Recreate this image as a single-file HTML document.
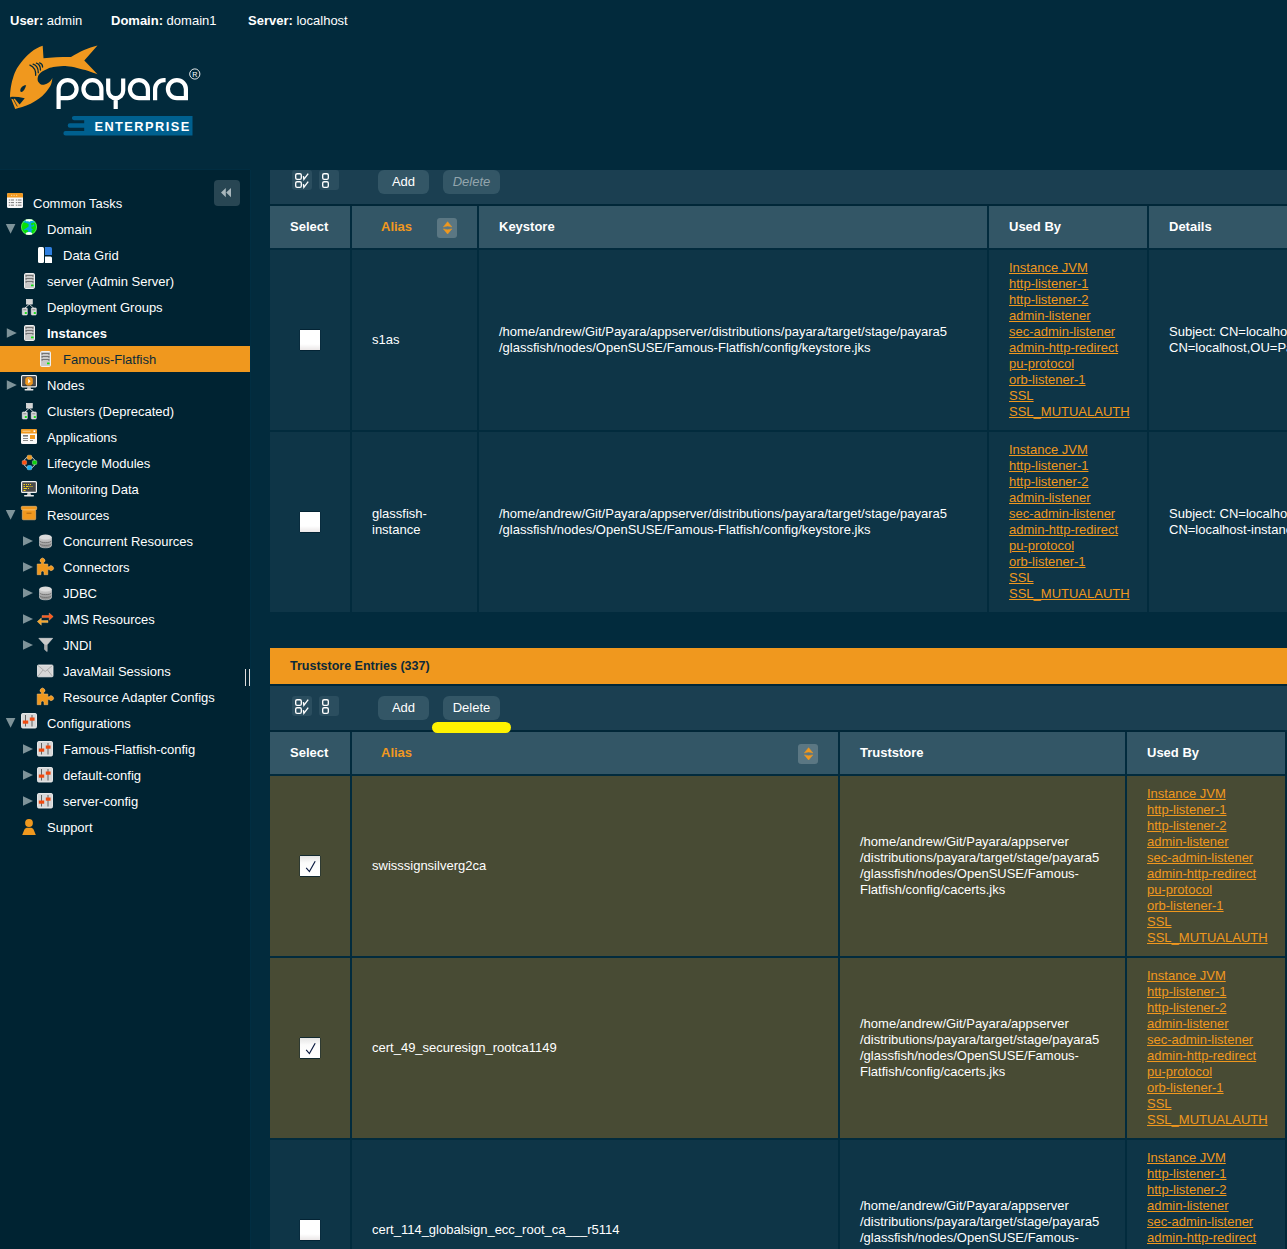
<!DOCTYPE html><html><head><meta charset="utf-8"><style>
*{box-sizing:border-box}
html,body{margin:0;padding:0}
body{width:1287px;height:1249px;overflow:hidden;position:relative;background:#022b3d;font-family:"Liberation Sans",sans-serif;font-size:13px;color:#fff}
.abs{position:absolute}
.hdr{left:0;top:0;width:1287px;height:170px;background:#022a3c}
.side{left:0;top:170px;width:250px;height:1079px;background:#002332}
.ti{position:absolute;height:26px;line-height:27px;white-space:nowrap;font-size:13px;color:#fff}
.tri{position:absolute;width:0;height:0}
.cell{position:absolute;overflow:hidden}
.th{background:#335666;font-weight:bold;font-size:13px;line-height:41px;padding-left:20px}
.td{background:#0e3547;line-height:16px;display:flex;align-items:center;padding-left:20px;padding-top:0px}
.sel{background:#484b34}
.lnk{color:#f0981e;text-decoration:underline}
.cb{position:absolute;width:20px;height:20px;background:linear-gradient(#fff 0%,#fff 70%,#ebe7e7 100%);box-shadow:0 -1px 0 rgba(0,30,45,.75),0 1px 0 rgba(0,30,45,.75),-1px 0 0 rgba(0,30,45,.35),1px 0 0 rgba(0,30,45,.35)}
.cbc{background:linear-gradient(#e4e4e4 0%,#fbfbfb 35%,#fff 100%)}
.btn{position:absolute;height:24px;border-radius:6px;background:#335666;line-height:24px;text-align:center;font-size:13px;color:#fff}
.ibtn{position:absolute;width:20px;height:20px;border-radius:3px;background:#2b4e5f}
.sort{position:absolute;width:20px;height:20px;border-radius:3px;background:#5b7783}
</style></head><body>

<div class="abs hdr">
<div class="abs" style="left:10px;top:13px;font-size:13px;line-height:15px;white-space:nowrap"><b>User:</b> admin</div>
<div class="abs" style="left:111px;top:13px;font-size:13px;line-height:15px;white-space:nowrap"><b>Domain:</b> domain1</div>
<div class="abs" style="left:248px;top:13px;font-size:13px;line-height:15px;white-space:nowrap"><b>Server:</b> localhost</div>
<svg class="abs" style="left:0;top:0" width="210" height="145" viewBox="0 0 210 145">
<path fill="#f0981e" d="M42.7,45.8 L43.5,58.3 C52,57.5 63,57 71,57.1 C80,51 88,48 97.5,45.4 L84.3,60.6 L97.5,74.2 C90,71.5 86,70 82.7,69.5 C75,67 68,66 63.3,66 C55,66.5 50,67.5 47.7,68.7 C43,70.5 40.5,72.5 39.2,74.2 C37,77 37.5,81 38.4,82 C40,84.5 42,85 43.9,84.7 C48,84 51,81 52.4,78 C52,81.5 51.5,84 50,86.6 C47,91 45,93.5 42.3,96 C38,99.5 34,102 30.6,103.7 C25,106 19,108 15.2,108.9 L11.4,99.2 L10.05,96.9 L10,96 C10.5,88 11.5,83 12.8,78.8 C15,71 17.5,67 20.5,63.3 C24,58.5 27,55.5 30.6,52.4 C35,49 39,47 42.7,45.8 Z"/>
<path fill="#022a3c" d="M26.2,85.3 C25.2,88.2 23.6,92.2 21.2,92 C19.6,91.4 20.2,88.6 21.8,87 C23.2,85.7 25,85 26.2,85.3 Z"/>
<path fill="#022a3c" d="M10.05,96.9 Q17,96.5 24.75,98.3 L19.6,104.6 L14.8,98.7 L11.5,99.3 Z"/>
<path stroke="#022a3c" stroke-width="0.8" fill="none" d="M13.3,99.1 L17.3,106.5"/>
<path stroke="#022a3c" stroke-width="1.25" fill="none" stroke-linecap="round" d="M29.9,65.1 Q36.1,68 35.7,75.3 M33.1,64.1 Q38.3,65.8 38.3,72.7 M36.4,63.2 Q40.5,64.5 40.5,70.1 M39.6,62.8 Q42.6,63.6 42.6,67.1"/>
<g fill="none" stroke="#fff" stroke-width="4.2" stroke-linecap="butt">
<path d="M58.6,109.1 V89.1 A9,9 0 1 1 67.6,98.1 H58.6"/>
<path d="M101.4,100.2 V89.1 A9,9 0 1 0 92.4,98.1 H101.4"/>
<path d="M108.2,78.6 V90.6 A7.5,7.5 0 0 0 123.2,90.6 V78.6 M115.7,97 V109.1"/>
<path d="M147.9,100.2 V89.1 A9,9 0 1 0 138.9,98.1 H147.9"/>
<path d="M155.1,100.2 V89 A9,9 0 0 1 164.1,80.1 H165.6"/>
<path d="M185.9,100.2 V89.1 A9,9 0 1 0 176.9,98.1 H185.9"/>
</g>
<circle cx="194.8" cy="74" r="5.1" fill="none" stroke="#fff" stroke-width="0.9"/>
<text x="194.9" y="76.6" font-size="7.2" fill="#fff" text-anchor="middle" font-family="Liberation Sans">R</text>
<path fill="#00608f" d="M74,116 H192.5 V135.5 H65.6 A2.2,2.2 0 0 1 65.6,131.1 H84.2 V127.7 H69.9 A2.2,2.2 0 0 1 69.9,123.3 H84.2 V120.2 H74 A2.1,2.1 0 0 1 74,116 Z"/>
<text x="94.4" y="130.5" font-size="12.8" font-weight="bold" fill="#fff" letter-spacing="1.45" font-family="Liberation Sans">ENTERPRISE</text>
</svg>
</div>
<div class="abs side">
<div class="ti" style="left:33px;top:20px;color:#fff;font-weight:normal">Common Tasks</div>
<div class="ti" style="left:47px;top:46px;color:#fff;font-weight:normal">Domain</div>
<div class="ti" style="left:63px;top:72px;color:#fff;font-weight:normal">Data Grid</div>
<div class="ti" style="left:47px;top:98px;color:#fff;font-weight:normal">server (Admin Server)</div>
<div class="ti" style="left:47px;top:124px;color:#fff;font-weight:normal">Deployment Groups</div>
<div class="ti" style="left:47px;top:150px;color:#fff;font-weight:bold">Instances</div>
<div class="abs" style="left:0;top:176px;width:250px;height:26px;background:#f0981e"></div>
<div class="ti" style="left:63px;top:176px;color:#0b2b3a;font-weight:normal">Famous-Flatfish</div>
<div class="ti" style="left:47px;top:202px;color:#fff;font-weight:normal">Nodes</div>
<div class="ti" style="left:47px;top:228px;color:#fff;font-weight:normal">Clusters (Deprecated)</div>
<div class="ti" style="left:47px;top:254px;color:#fff;font-weight:normal">Applications</div>
<div class="ti" style="left:47px;top:280px;color:#fff;font-weight:normal">Lifecycle Modules</div>
<div class="ti" style="left:47px;top:306px;color:#fff;font-weight:normal">Monitoring Data</div>
<div class="ti" style="left:47px;top:332px;color:#fff;font-weight:normal">Resources</div>
<div class="ti" style="left:63px;top:358px;color:#fff;font-weight:normal">Concurrent Resources</div>
<div class="ti" style="left:63px;top:384px;color:#fff;font-weight:normal">Connectors</div>
<div class="ti" style="left:63px;top:410px;color:#fff;font-weight:normal">JDBC</div>
<div class="ti" style="left:63px;top:436px;color:#fff;font-weight:normal">JMS Resources</div>
<div class="ti" style="left:63px;top:462px;color:#fff;font-weight:normal">JNDI</div>
<div class="ti" style="left:63px;top:488px;color:#fff;font-weight:normal">JavaMail Sessions</div>
<div class="ti" style="left:63px;top:514px;color:#fff;font-weight:normal">Resource Adapter Configs</div>
<div class="ti" style="left:47px;top:540px;color:#fff;font-weight:normal">Configurations</div>
<div class="ti" style="left:63px;top:566px;color:#fff;font-weight:normal">Famous-Flatfish-config</div>
<div class="ti" style="left:63px;top:592px;color:#fff;font-weight:normal">default-config</div>
<div class="ti" style="left:63px;top:618px;color:#fff;font-weight:normal">server-config</div>
<div class="ti" style="left:47px;top:644px;color:#fff;font-weight:normal">Support</div>
<div class="abs" style="left:214px;top:10px;width:26px;height:26px;border-radius:4px;background:#284653"></div>
<svg class="abs" style="left:220px;top:17px" width="14" height="12"><path d="M5.8,1 L1,5.6 L5.8,10.2Z M11,1 L6.2,5.6 L11,10.2Z" fill="#a9b7bc"/></svg>
<div class="abs" style="left:245px;top:499px;width:5px;height:17px;border-left:1px solid #ddd;border-right:1px solid #ddd"></div>
</div>
<div class="abs" style="left:250px;top:170px;width:1px;height:1079px;background:#012e42"></div>
<div class="abs" style="left:0;top:169px;width:250px;height:1px;background:#012d41"></div>
<svg class="abs" style="left:0;top:0;z-index:2" width="250" height="860" viewBox="0 0 250 860"><rect x="7" y="193" width="16" height="15" rx="1.6" fill="#f7f7f7"/><path d="M7,197.6 V194.6 A1.6,1.6 0 0 1 8.6,193 H21.4 A1.6,1.6 0 0 1 23,194.6 V197.6 Z" fill="#f0981e"/><path d="M11,195.3h1.2M13.5,195.3h1.2M16,195.3h1.2" stroke="#fde3b8" stroke-width="0.9"/><path d="M8.8,200.0h1.5M11,200.0h3M15.8,200.0h1.5M18,200.0h3.5" stroke="#777" stroke-width="1"/><path d="M8.8,202.6h1.5M11,202.6h3M15.8,202.6h1.5M18,202.6h3.5" stroke="#777" stroke-width="1"/><path d="M8.8,205.2h1.5M11,205.2h3M15.8,205.2h1.5M18,205.2h3.5" stroke="#777" stroke-width="1"/><clipPath id="gc"><circle cx="29" cy="227" r="8"/></clipPath><g clip-path="url(#gc)"><rect x="20" y="218" width="18" height="18" fill="#08e008"/><path d="M23.5,220.6 H34.5 V223 C33.8,222.6 32.6,222.7 31.2,223.2 C30.8,224 31,225.2 32,225.4 C33,225.4 33.6,224.5 33.9,223.4 L34.2,226 C33.5,226.6 32.3,226.5 31.4,226.4 V228.4 C32,228.6 33,229 33.5,229.6 L31.6,230 V233.5 H26.3 C26.8,232.6 27.6,232 28.4,231.6 C28.3,230.6 27.3,229.8 26.2,229.8 C25.6,230 24.8,230.3 24,230.2 L24.4,229 C25.6,228.6 27.4,227.6 28.6,226.4 L28.6,224 C27.2,223.4 25.2,222.8 23.5,222.3 Z" fill="#08a8e0"/><path d="M25,218.6 H33 L32.6,221 C31.6,221 30.4,221 29.6,221.8 C29,221.2 28,221 26,221.2 Z" fill="#fff"/><path d="M25.6,235.4 L26,232.8 C27,232.2 28,232 29,232 C30,232 31.2,232.3 32,233 L32.4,235.4 Z" fill="#fff"/></g><circle cx="29" cy="227" r="7.6" fill="none" stroke="#c8f0c8" stroke-width="0.7" opacity="0.6"/><rect x="38" y="247" width="6" height="16" rx="1.5" fill="#fff"/><path d="M45,247 H50.5 A1.5,1.5 0 0 1 52,248.5 V255 H45 Z" fill="#2f7fe0"/><path d="M45,256.5 H50.5 A1.5,1.5 0 0 1 52,258 V263 H45 Z" fill="#fff"/><rect x="24.5" y="273.5" width="10" height="15" rx="1.2" fill="#c9c9c9" stroke="#f0f0f0" stroke-width="1"/><path d="M25.6,275.5h7.8 M26.1,275.5v1.4 M32.9,275.5v1.4 M25.6,278.5h7.8 M26.1,278.5v1.4 M32.9,278.5v1.4 M25.6,281.5h7.8 M26.1,281.5v1.4 M32.9,281.5v1.4 " stroke="#747474" stroke-width="1" fill="none"/><rect x="31" y="284.6" width="2.6" height="1.6" rx="0.5" fill="#10e010"/><rect x="24.5" y="325.5" width="10" height="15" rx="1.2" fill="#c9c9c9" stroke="#f0f0f0" stroke-width="1"/><path d="M25.6,327.5h7.8 M26.1,327.5v1.4 M32.9,327.5v1.4 M25.6,330.5h7.8 M26.1,330.5v1.4 M32.9,330.5v1.4 M25.6,333.5h7.8 M26.1,333.5v1.4 M32.9,333.5v1.4 " stroke="#747474" stroke-width="1" fill="none"/><rect x="31" y="336.6" width="2.6" height="1.6" rx="0.5" fill="#10e010"/><rect x="40.5" y="351.5" width="10" height="15" rx="1.2" fill="#c9c9c9" stroke="#f0f0f0" stroke-width="1"/><path d="M41.6,353.5h7.8 M42.1,353.5v1.4 M48.9,353.5v1.4 M41.6,356.5h7.8 M42.1,356.5v1.4 M48.9,356.5v1.4 M41.6,359.5h7.8 M42.1,359.5v1.4 M48.9,359.5v1.4 " stroke="#747474" stroke-width="1" fill="none"/><rect x="47" y="362.6" width="2.6" height="1.6" rx="0.5" fill="#10e010"/><rect x="26.3" y="299.3" width="6" height="4.8" fill="#d4d4d4" stroke="#eee" stroke-width="0.6"/><path d="M29.3,304.2 L24.5,308.5 M29.3,304.2 L34,308.5" stroke="#ddd" stroke-width="0.9"/><rect x="22.3" y="308" width="5" height="7" rx="0.8" fill="#d4d4d4" stroke="#eee" stroke-width="0.6"/><path d="M23.3,309.8h3" stroke="#777" stroke-width="0.8"/><rect x="24.8" y="312" width="2" height="2" fill="#1ee01e"/><rect x="31.3" y="308" width="5" height="7" rx="0.8" fill="#d4d4d4" stroke="#eee" stroke-width="0.6"/><path d="M32.3,309.8h3" stroke="#777" stroke-width="0.8"/><rect x="33.8" y="312" width="2" height="2" fill="#1ee01e"/><rect x="26.3" y="403.3" width="6" height="4.8" fill="#d4d4d4" stroke="#eee" stroke-width="0.6"/><path d="M29.3,408.2 L24.5,412.5 M29.3,408.2 L34,412.5" stroke="#ddd" stroke-width="0.9"/><rect x="22.3" y="412" width="5" height="7" rx="0.8" fill="#d4d4d4" stroke="#eee" stroke-width="0.6"/><path d="M23.3,413.8h3" stroke="#777" stroke-width="0.8"/><rect x="24.8" y="416" width="2" height="2" fill="#1ee01e"/><rect x="31.3" y="412" width="5" height="7" rx="0.8" fill="#d4d4d4" stroke="#eee" stroke-width="0.6"/><path d="M32.3,413.8h3" stroke="#777" stroke-width="0.8"/><rect x="33.8" y="416" width="2" height="2" fill="#1ee01e"/><rect x="21.6" y="375.6" width="14.8" height="11.2" rx="1" fill="#333" stroke="#f2f2f2" stroke-width="1.2"/><rect x="23" y="377" width="12" height="8.4" fill="#505050"/><path d="M27,377 H31 L32.8,378.8 V383.6 L31,385.4 H27 L25.3,383.6 V378.8 Z" fill="#f0981e"/><path d="M28.2,378.8 L30.6,381.2 L28.2,383.6 Z" fill="#fff"/><path d="M27.5,387 H30.5 L31,389 H27 Z" fill="#ccc"/><rect x="24.5" y="389" width="9" height="1.5" rx="0.7" fill="#e8e8e8"/><rect x="21" y="429" width="16" height="15" rx="1.5" fill="#f8f8f8"/><path d="M21,433.5 V430.5 A1.5,1.5 0 0 1 22.5,429 H35.5 A1.5,1.5 0 0 1 37,430.5 V433.5 Z" fill="#f0981e"/><path d="M22.5,431.2h8" stroke="#fde3b8" stroke-width="0.8"/><rect x="33.5" y="430.3" width="1.8" height="1.8" fill="#fff"/><rect x="23" y="435" width="5" height="1.6" fill="#777"/><rect x="23" y="438" width="5" height="1" fill="#888"/><rect x="23" y="440" width="5" height="1" fill="#888"/><rect x="30" y="435" width="5" height="4" fill="#f0981e"/><rect x="30" y="440" width="3" height="1" fill="#888"/><circle cx="29.5" cy="462.5" r="5.7" fill="none" stroke="#e0e0e0" stroke-width="0.9"/><rect x="27.2" y="455.2" width="4.6" height="4.2" rx="1.2" fill="#f0981e" stroke="#ffd9a0" stroke-width="0.4"/><rect x="22.2" y="460.4" width="4.4" height="4.2" rx="1.2" fill="#ff5010" stroke="#ffb090" stroke-width="0.4"/><rect x="32.4" y="460.4" width="4.4" height="4.2" rx="1.2" fill="#10d010" stroke="#b0ffb0" stroke-width="0.4"/><rect x="27.2" y="465.6" width="4.6" height="4.2" rx="1.2" fill="#18b0f0" stroke="#b0e8ff" stroke-width="0.4"/><rect x="21.6" y="481.6" width="14.8" height="10.8" rx="1" fill="#4a4a4a" stroke="#f2f2f2" stroke-width="1.2"/><path d="M23.5,484.5h1.5M26,484.5h1M28,484.5h1M30,484.5h1 M23.5,486.5h1.5M26,486.5h2.5M29.5,486.5h1M31.5,486.5h1 M23.5,488.5h3.5M28,488.5h1 M23.5,490.5h2" stroke="#f3d31e" stroke-width="1"/><path d="M27.5,493 H30.5 L31,495 H27 Z" fill="#ccc"/><rect x="24" y="495" width="10" height="1.5" rx="0.7" fill="#e8e8e8"/><rect x="21.3" y="506.3" width="15.4" height="3.6" rx="1" fill="#f0981e" stroke="#ffd090" stroke-width="0.5"/><rect x="22.3" y="510" width="13.4" height="9.8" rx="1" fill="#f0981e" stroke="#ffd090" stroke-width="0.5"/><rect x="26.5" y="512.7" width="5" height="1" fill="#a86410"/><defs><linearGradient id="dbg" x1="0" y1="0" x2="0" y2="1"><stop offset="0" stop-color="#d6d6d6"/><stop offset="1" stop-color="#8c8c8c"/></linearGradient></defs><path d="M39.5,537 V545.5 C39.5,548.6 51.5,548.6 51.5,545.5 V537 Z" fill="url(#dbg)" stroke="#ddd" stroke-width="0.6"/><ellipse cx="45.5" cy="537" rx="6" ry="2.5" fill="#dcdcdc"/><path d="M39.8,540.8 C39.8,543.3 51.2,543.3 51.2,540.8 M39.8,543.6 C39.8,546.1 51.2,546.1 51.2,543.6" stroke="#707070" stroke-width="0.9" fill="none"/><defs><linearGradient id="dbg" x1="0" y1="0" x2="0" y2="1"><stop offset="0" stop-color="#d6d6d6"/><stop offset="1" stop-color="#8c8c8c"/></linearGradient></defs><path d="M39.5,589 V597.5 C39.5,600.6 51.5,600.6 51.5,597.5 V589 Z" fill="url(#dbg)" stroke="#ddd" stroke-width="0.6"/><ellipse cx="45.5" cy="589" rx="6" ry="2.5" fill="#dcdcdc"/><path d="M39.8,592.8 C39.8,595.3 51.2,595.3 51.2,592.8 M39.8,595.6 C39.8,598.1 51.2,598.1 51.2,595.6" stroke="#707070" stroke-width="0.9" fill="none"/><path d="M37.2,564 H41.3 V562.6 A2.4,2.4 0 1 1 43.7,562.6 V564 H47.8 V566.8 H49.2 A2.4,2.4 0 1 1 49.2,569.6 H47.8 V574.7 H44 V572.5 A1.5,1.5 0 0 0 41,572.5 V574.7 H37.2 Z" fill="#f0981e" stroke="#f7c27a" stroke-width="0.5"/><path d="M37.2,694 H41.3 V692.6 A2.4,2.4 0 1 1 43.7,692.6 V694 H47.8 V696.8 H49.2 A2.4,2.4 0 1 1 49.2,699.6 H47.8 V704.7 H44 V702.5 A1.5,1.5 0 0 0 41,702.5 V704.7 H37.2 Z" fill="#f0981e" stroke="#f7c27a" stroke-width="0.5"/><path d="M42,615.6 H49.2 V613 L53.2,616.6 L49.2,620.2 V617.6 H42 Z" fill="#ff5a1a" stroke="#ff9a70" stroke-width="0.4"/><path d="M48,620.6 H41.3 V618 L37.3,621.6 L41.3,625.2 V622.6 H48 Z" fill="#f5a52a" stroke="#ffd08a" stroke-width="0.4"/><path d="M38.8,638.3 H52.7 L47.1,644.8 V651.5 L44.7,649.5 V644.8 Z" fill="#c9c9c9" stroke="#e8e8e8" stroke-width="0.5"/><path d="M44.7,644.8 V649.5 L47.1,651.5 V644.8Z" fill="#a9a9a9"/><rect x="37.5" y="665.0" width="15.5" height="11.8" rx="1" fill="#d6d6d6" stroke="#f0f0f0" stroke-width="0.8"/><path d="M38,665.5 L45.2,671.5 L52.5,665.5 M38,676.3 L43,670.0 M52.5,676.3 L47.5,670.0" stroke="#a0a0a0" stroke-width="0.8" fill="none"/><rect x="21.5" y="713.5" width="15" height="14.5" rx="1.3" fill="#d8d8d8" stroke="#f2f2f2" stroke-width="0.9"/><path d="M25.5,715 V726.5 M32,715 V726.5" stroke="#555" stroke-width="0.9"/><rect x="22.8" y="720.5" width="5.4" height="3.2" fill="#f04a10"/><rect x="29.8" y="717.5" width="4.8" height="3.2" fill="#f04a10"/><rect x="37.5" y="741.5" width="15" height="14.5" rx="1.3" fill="#d8d8d8" stroke="#f2f2f2" stroke-width="0.9"/><path d="M41.5,743 V754.5 M48,743 V754.5" stroke="#555" stroke-width="0.9"/><rect x="38.8" y="748.5" width="5.4" height="3.2" fill="#f04a10"/><rect x="45.8" y="745.5" width="4.8" height="3.2" fill="#f04a10"/><rect x="37.5" y="767.5" width="15" height="14.5" rx="1.3" fill="#d8d8d8" stroke="#f2f2f2" stroke-width="0.9"/><path d="M41.5,769 V780.5 M48,769 V780.5" stroke="#555" stroke-width="0.9"/><rect x="38.8" y="774.5" width="5.4" height="3.2" fill="#f04a10"/><rect x="45.8" y="771.5" width="4.8" height="3.2" fill="#f04a10"/><rect x="37.5" y="793.5" width="15" height="14.5" rx="1.3" fill="#d8d8d8" stroke="#f2f2f2" stroke-width="0.9"/><path d="M41.5,795 V806.5 M48,795 V806.5" stroke="#555" stroke-width="0.9"/><rect x="38.8" y="800.5" width="5.4" height="3.2" fill="#f04a10"/><rect x="45.8" y="797.5" width="4.8" height="3.2" fill="#f04a10"/><circle cx="29" cy="823" r="3.9" fill="#f0981e"/><path d="M22.2,835 L24.2,830 C25,828.2 26.5,827.8 27.5,827.8 H30.5 C31.5,827.8 33,828.2 33.8,830 L35.8,835 Z" fill="#f0981e"/><path d="M5.8,224 H15.399999999999999 L10.6,233.8 Z" fill="#7e9399"/><path d="M5.8,510 H15.399999999999999 L10.6,519.8 Z" fill="#7e9399"/><path d="M5.8,718 H15.399999999999999 L10.6,727.8 Z" fill="#7e9399"/><path d="M6.8,328.3 V337.7 L16.8,333.0 Z" fill="#7e9399"/><path d="M6.8,380.3 V389.7 L16.8,385.0 Z" fill="#7e9399"/><path d="M23,536.3 V545.6999999999999 L33,541.0 Z" fill="#7e9399"/><path d="M23,562.3 V571.6999999999999 L33,567.0 Z" fill="#7e9399"/><path d="M23,588.3 V597.6999999999999 L33,593.0 Z" fill="#7e9399"/><path d="M23,614.3 V623.6999999999999 L33,619.0 Z" fill="#7e9399"/><path d="M23,640.3 V649.6999999999999 L33,645.0 Z" fill="#7e9399"/><path d="M23,744.3 V753.6999999999999 L33,749.0 Z" fill="#7e9399"/><path d="M23,770.3 V779.6999999999999 L33,775.0 Z" fill="#7e9399"/><path d="M23,796.3 V805.6999999999999 L33,801.0 Z" fill="#7e9399"/></svg>
<div class="abs" style="left:270px;top:170px;width:1017px;height:34px;background:#1b3f51"></div>
<div class="ibtn" style="left:292px;top:170px"></div>
<div class="ibtn" style="left:319px;top:170px"></div>
<svg class="abs" style="left:292px;top:170px" width="20" height="20"><rect x="3.7" y="3.7" width="5.6" height="5.6" rx="1.4" stroke="#fff" stroke-width="1.35" fill="none"/><rect x="3.7" y="11.7" width="5.6" height="5.6" rx="1.4" stroke="#fff" stroke-width="1.35" fill="none"/><path d="M11.4,6.2 L11.9,9.3 L16.2,3.6 M11.4,14.2 L11.9,17.3 L16.2,11.6" stroke="#fff" stroke-width="1.4" fill="none"/></svg>
<svg class="abs" style="left:319px;top:170px" width="20" height="20"><rect x="3.7" y="3.7" width="5.6" height="5.6" rx="1.4" stroke="#fff" stroke-width="1.35" fill="none"/><rect x="3.7" y="11.7" width="5.6" height="5.6" rx="1.4" stroke="#fff" stroke-width="1.35" fill="none"/></svg>
<div class="btn" style="left:378px;top:170px;width:51px">Add</div>
<div class="btn" style="left:443px;top:170px;width:57px;color:#93a5ad;font-style:italic">Delete</div>
<div class="abs" style="left:270px;top:204px;width:1017px;height:2px;background:#012738"></div>
<div class="cell th" style="left:270px;top:206px;width:80px;height:42px;color:#fff;padding-left:20px">Select</div>
<div class="cell th" style="left:352px;top:206px;width:125px;height:42px;color:#f0981e;padding-left:29px">Alias</div>
<div class="cell th" style="left:479px;top:206px;width:508px;height:42px;color:#fff;padding-left:20px">Keystore</div>
<div class="cell th" style="left:989px;top:206px;width:158px;height:42px;color:#fff;padding-left:20px">Used By</div>
<div class="cell th" style="left:1149px;top:206px;width:300px;height:42px;color:#fff;padding-left:20px">Details</div>
<div class="sort" style="left:437px;top:218px"></div><svg class="abs" style="left:437px;top:218px" width="20" height="20"><path d="M10.6,3.7 L14.8,8.9 Q10.6,7.3 6.4,8.9 Z M10.6,16 L14.8,10.9 Q10.6,12.5 6.4,10.9 Z" fill="#f0981e" stroke="#f0981e" stroke-width="0.5" stroke-linejoin="round"/></svg>
<div class="cell td" style="left:270px;top:250px;width:80px;height:180px"><div style="white-space:nowrap"></div></div>
<div class="cell td" style="left:352px;top:250px;width:125px;height:180px"><div style="width:85px">s1as</div></div>
<div class="cell td" style="left:479px;top:250px;width:508px;height:180px"><div style="white-space:nowrap">/home/andrew/Git/Payara/appserver/distributions/payara/target/stage/payara5<br>/glassfish/nodes/OpenSUSE/Famous-Flatfish/config/keystore.jks</div></div>
<div class="cell td" style="left:989px;top:250px;width:158px;height:180px"><div style="white-space:nowrap"><span class="lnk">Instance JVM</span><br><span class="lnk">http-listener-1</span><br><span class="lnk">http-listener-2</span><br><span class="lnk">admin-listener</span><br><span class="lnk">sec-admin-listener</span><br><span class="lnk">admin-http-redirect</span><br><span class="lnk">pu-protocol</span><br><span class="lnk">orb-listener-1</span><br><span class="lnk">SSL</span><br><span class="lnk">SSL_MUTUALAUTH</span></div></div>
<div class="cell td" style="left:1149px;top:250px;width:300px;height:180px"><div style="white-space:nowrap">Subject: CN=localhost,OU=Payara,O=Payara Foundation,L=Great Malvern,ST=Worcestershire,C=UK<br>CN=localhost,OU=Payara,O=Payara Foundation</div></div>
<div class="cb" style="left:300px;top:330px"></div>
<div class="cell td" style="left:270px;top:432px;width:80px;height:180px"><div style="white-space:nowrap"></div></div>
<div class="cell td" style="left:352px;top:432px;width:125px;height:180px"><div style="width:85px">glassfish-instance</div></div>
<div class="cell td" style="left:479px;top:432px;width:508px;height:180px"><div style="white-space:nowrap">/home/andrew/Git/Payara/appserver/distributions/payara/target/stage/payara5<br>/glassfish/nodes/OpenSUSE/Famous-Flatfish/config/keystore.jks</div></div>
<div class="cell td" style="left:989px;top:432px;width:158px;height:180px"><div style="white-space:nowrap"><span class="lnk">Instance JVM</span><br><span class="lnk">http-listener-1</span><br><span class="lnk">http-listener-2</span><br><span class="lnk">admin-listener</span><br><span class="lnk">sec-admin-listener</span><br><span class="lnk">admin-http-redirect</span><br><span class="lnk">pu-protocol</span><br><span class="lnk">orb-listener-1</span><br><span class="lnk">SSL</span><br><span class="lnk">SSL_MUTUALAUTH</span></div></div>
<div class="cell td" style="left:1149px;top:432px;width:300px;height:180px"><div style="white-space:nowrap">Subject: CN=localhost-instance,OU=Payara,O=Payara Foundation<br>CN=localhost-instance,OU=Payara</div></div>
<div class="cb" style="left:300px;top:512px"></div>
<div class="abs" style="left:270px;top:648px;width:1017px;height:36px;background:#f0981e;color:#0b2a3a;font-weight:bold;font-size:12.5px;line-height:37px;padding-left:20px">Truststore Entries (337)</div>
<div class="abs" style="left:270px;top:684px;width:1017px;height:2px;background:#012738"></div>
<div class="abs" style="left:270px;top:686px;width:1017px;height:44px;background:#1b3f51"></div>
<div class="ibtn" style="left:292px;top:696px"></div>
<div class="ibtn" style="left:319px;top:696px"></div>
<svg class="abs" style="left:292px;top:696px" width="20" height="20"><rect x="3.7" y="3.7" width="5.6" height="5.6" rx="1.4" stroke="#fff" stroke-width="1.35" fill="none"/><rect x="3.7" y="11.7" width="5.6" height="5.6" rx="1.4" stroke="#fff" stroke-width="1.35" fill="none"/><path d="M11.4,6.2 L11.9,9.3 L16.2,3.6 M11.4,14.2 L11.9,17.3 L16.2,11.6" stroke="#fff" stroke-width="1.4" fill="none"/></svg>
<svg class="abs" style="left:319px;top:696px" width="20" height="20"><rect x="3.7" y="3.7" width="5.6" height="5.6" rx="1.4" stroke="#fff" stroke-width="1.35" fill="none"/><rect x="3.7" y="11.7" width="5.6" height="5.6" rx="1.4" stroke="#fff" stroke-width="1.35" fill="none"/></svg>
<div class="btn" style="left:378px;top:696px;width:51px">Add</div>
<div class="btn" style="left:443px;top:696px;width:57px">Delete</div>
<div class="abs" style="left:270px;top:730px;width:1015px;height:2px;background:#012738"></div>
<div class="cell th" style="left:270px;top:732px;width:80px;height:42px;color:#fff;padding-left:20px">Select</div>
<div class="cell th" style="left:352px;top:732px;width:486px;height:42px;color:#f0981e;padding-left:29px">Alias</div>
<div class="cell th" style="left:840px;top:732px;width:285px;height:42px;color:#fff;padding-left:20px">Truststore</div>
<div class="cell th" style="left:1127px;top:732px;width:158px;height:42px;color:#fff;padding-left:20px">Used By</div>
<div class="sort" style="left:798px;top:744px"></div><svg class="abs" style="left:798px;top:744px" width="20" height="20"><path d="M10.6,3.7 L14.8,8.9 Q10.6,7.3 6.4,8.9 Z M10.6,16 L14.8,10.9 Q10.6,12.5 6.4,10.9 Z" fill="#f0981e" stroke="#f0981e" stroke-width="0.5" stroke-linejoin="round"/></svg>
<div class="cell td sel" style="left:270px;top:776px;width:80px;height:180px"><div style="white-space:nowrap"></div></div>
<div class="cell td sel" style="left:352px;top:776px;width:486px;height:180px"><div style="white-space:nowrap">swisssignsilverg2ca</div></div>
<div class="cell td sel" style="left:840px;top:776px;width:285px;height:180px"><div style="white-space:nowrap">/home/andrew/Git/Payara/appserver<br>/distributions/payara/target/stage/payara5<br>/glassfish/nodes/OpenSUSE/Famous-<br>Flatfish/config/cacerts.jks</div></div>
<div class="cell td sel" style="left:1127px;top:776px;width:158px;height:180px"><div style="white-space:nowrap"><span class="lnk">Instance JVM</span><br><span class="lnk">http-listener-1</span><br><span class="lnk">http-listener-2</span><br><span class="lnk">admin-listener</span><br><span class="lnk">sec-admin-listener</span><br><span class="lnk">admin-http-redirect</span><br><span class="lnk">pu-protocol</span><br><span class="lnk">orb-listener-1</span><br><span class="lnk">SSL</span><br><span class="lnk">SSL_MUTUALAUTH</span></div></div>
<div class="cb cbc" style="left:300px;top:856px"></div>
<svg class="abs" style="left:300px;top:856px" width="20" height="20"><path d="M6.2,11.8 L9.4,15.6 L15.2,5.2" stroke="#0a1a40" stroke-width="1.15" fill="none"/></svg>
<div class="cell td sel" style="left:270px;top:958px;width:80px;height:180px"><div style="white-space:nowrap"></div></div>
<div class="cell td sel" style="left:352px;top:958px;width:486px;height:180px"><div style="white-space:nowrap">cert_49_securesign_rootca1149</div></div>
<div class="cell td sel" style="left:840px;top:958px;width:285px;height:180px"><div style="white-space:nowrap">/home/andrew/Git/Payara/appserver<br>/distributions/payara/target/stage/payara5<br>/glassfish/nodes/OpenSUSE/Famous-<br>Flatfish/config/cacerts.jks</div></div>
<div class="cell td sel" style="left:1127px;top:958px;width:158px;height:180px"><div style="white-space:nowrap"><span class="lnk">Instance JVM</span><br><span class="lnk">http-listener-1</span><br><span class="lnk">http-listener-2</span><br><span class="lnk">admin-listener</span><br><span class="lnk">sec-admin-listener</span><br><span class="lnk">admin-http-redirect</span><br><span class="lnk">pu-protocol</span><br><span class="lnk">orb-listener-1</span><br><span class="lnk">SSL</span><br><span class="lnk">SSL_MUTUALAUTH</span></div></div>
<div class="cb cbc" style="left:300px;top:1038px"></div>
<svg class="abs" style="left:300px;top:1038px" width="20" height="20"><path d="M6.2,11.8 L9.4,15.6 L15.2,5.2" stroke="#0a1a40" stroke-width="1.15" fill="none"/></svg>
<div class="cell td" style="left:270px;top:1140px;width:80px;height:180px"><div style="white-space:nowrap"></div></div>
<div class="cell td" style="left:352px;top:1140px;width:486px;height:180px"><div style="white-space:nowrap">cert_114_globalsign_ecc_root_ca___r5114</div></div>
<div class="cell td" style="left:840px;top:1140px;width:285px;height:180px"><div style="white-space:nowrap">/home/andrew/Git/Payara/appserver<br>/distributions/payara/target/stage/payara5<br>/glassfish/nodes/OpenSUSE/Famous-<br>Flatfish/config/cacerts.jks</div></div>
<div class="cell td" style="left:1127px;top:1140px;width:158px;height:180px"><div style="white-space:nowrap"><span class="lnk">Instance JVM</span><br><span class="lnk">http-listener-1</span><br><span class="lnk">http-listener-2</span><br><span class="lnk">admin-listener</span><br><span class="lnk">sec-admin-listener</span><br><span class="lnk">admin-http-redirect</span><br><span class="lnk">pu-protocol</span><br><span class="lnk">orb-listener-1</span><br><span class="lnk">SSL</span><br><span class="lnk">SSL_MUTUALAUTH</span></div></div>
<div class="cb" style="left:300px;top:1220px"></div>
<div class="abs" style="left:1285px;top:732px;width:2px;height:517px;background:#012738"></div>
<div class="abs" style="left:432px;top:722px;width:79px;height:10.5px;border-radius:5.5px;background:#fff200"></div>
</body></html>
